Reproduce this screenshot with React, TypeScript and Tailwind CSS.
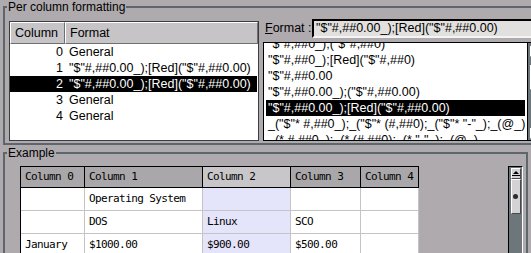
import React from "react";

const leftRows = [
  { col: "0", fmt: "General" },
  { col: "1", fmt: '"$"#,##0.00_);[Red]("$"#,##0.00)' },
  { col: "2", fmt: '"$"#,##0.00_);[Red]("$"#,##0.00)', selected: true },
  { col: "3", fmt: "General" },
  { col: "4", fmt: "General" },
];

const formats = [
  '"$"#,##0_);("$"#,##0)',
  '"$"#,##0_);[Red]("$"#,##0)',
  '"$"#,##0.00',
  '"$"#,##0.00_);("$"#,##0.00)',
  '"$"#,##0.00_);[Red]("$"#,##0.00)',
  '_("$"* #,##0_);_("$"* (#,##0);_("$"* "-"_);_(@_)',
  '_(* #,##0_);_(* (#,##0);_(* "-"_);_(@_)',
];

const columns = ["Column 0", "Column 1", "Column 2", "Column 3", "Column 4"];
const rows = [
  ["", "Operating System", "", "", ""],
  ["", "DOS", "Linux", "SCO", ""],
  ["January", "$1000.00", "$900.00", "$500.00", ""],
];

function Arrow({ up }: { up?: boolean }) {
  return (
    <svg width="8" height="7" viewBox="0 0 8 7">
      {up ? (
        <>
          <path d="M1 4 L4 1 L7 4 Z" fill="#000" />
          <rect x="0" y="5" width="8" height="1" fill="#000" />
        </>
      ) : (
        <>
          <rect x="0" y="1" width="8" height="1" fill="#000" />
          <path d="M1 3 L4 6 L7 3 Z" fill="#000" />
        </>
      )}
    </svg>
  );
}

function Thumb({ h }: { h: string }) {
  return (
    <div
      className={`w-[10px] ${h} bg-[#d4d2d4] border border-t-white border-l-white border-r-[#4a4a4a] border-b-[#4a4a4a] flex items-center justify-center`}
    >
      <div className="w-[5px] h-[5px] rounded-full bg-[#2b2b2b]" />
    </div>
  );
}

function ArrowButton({ up }: { up?: boolean }) {
  return (
    <div className="w-[10px] h-[11px] bg-[#d4d2d4] border border-t-white border-l-white border-r-[#4a4a4a] border-b-[#4a4a4a] flex items-center justify-center">
      <Arrow up={up} />
    </div>
  );
}

export default function App() {
  return (
    <div className="w-[531px] h-[253px] overflow-hidden bg-[#aeaaae] font-['Liberation_Sans',Arial,sans-serif] text-[12px] text-black">
      <fieldset className="mx-[3px] border-2 border-[#5d676b] pt-[5px] pr-[3px] pb-[2px] pl-[4px]">
        <legend className="-ml-[2px] px-[1px] leading-[14px]">Per column formatting</legend>
        <div className="flex items-start gap-[4px] text-[12.5px]">
          {/* column list */}
          <div className="mt-[2px] w-[250px] h-[120px] border border-[#3c3c3c] bg-white">
            <div className="flex h-[22px] leading-[20px]">
              <div className="w-[55px] bg-[#c6c4c6] border border-t-white border-l-white border-r-[#6f6f6f] border-b-[#6f6f6f] pl-[4px]">
                Column
              </div>
              <div className="flex-1 bg-[#c6c4c6] border border-t-white border-l-white border-r-[#6f6f6f] border-b-[#6f6f6f] pl-[4px]">
                Format
              </div>
            </div>
            {leftRows.map((r) => (
              <div
                key={r.col}
                className={`flex h-[16px] leading-[17px] mr-[1px] ${r.selected ? "bg-black text-white" : ""}`}
              >
                <span className="w-[55px] text-right pr-[2px]">{r.col}</span>
                <span className="pl-[4px] whitespace-nowrap">{r.fmt}</span>
              </div>
            ))}
          </div>

          {/* format chooser */}
          <div className="flex-1 flex flex-col gap-[4px]">
            <div className="flex items-center h-[19px]">
              <span className="ml-[2px] w-[47px] whitespace-nowrap">
                <span className="underline">F</span>ormat :
              </span>
              <div className="flex-1 h-[19px] bg-[#e2e0de] border-2 border-t-black border-l-black border-r-[#f4f4f4] border-b-[#f4f4f4] pl-[2px] leading-[15px] whitespace-nowrap overflow-hidden">
                "$"#,##0.00_);[Red]("$"#,##0.00)
              </div>
            </div>
            <div className="h-[99px] border border-black bg-white flex">
              <div className="flex-1 overflow-hidden">
                <div className="-mt-[7px]">
                  {formats.map((f, i) => (
                    <div
                      key={f}
                      className={`h-[16px] leading-[16px] mx-[2px] pl-[2px] whitespace-nowrap overflow-hidden ${i === 4 ? "bg-black text-white" : ""}`}
                    >
                      {f}
                    </div>
                  ))}
                </div>
              </div>
              <div className="w-[14px] bg-[#6d767a] border-l border-black flex flex-col items-center pt-[3px] pb-[1px]">
                <ArrowButton up />
                <div className="mt-[8px]">
                  <Thumb h="h-[25px]" />
                </div>
                <div className="flex-1" />
                <ArrowButton />
              </div>
            </div>
          </div>
        </div>
      </fieldset>

      <fieldset className="mx-[3px] mt-[1px] h-[130px] border-2 border-[#5d676b] pt-[6px] pl-[15px] pr-[3px]">
        <legend className="-ml-[13px] px-[1px] leading-[14px]">Example</legend>
        <div className="flex justify-between items-start">
          <div className="grid grid-cols-[64px_118px_88px_70px_58px] border-t border-l border-black font-['DejaVu_Sans_Mono',monospace] text-[11px] tracking-[-0.6px]">
            {columns.map((c, i) => (
              <div
                key={c}
                className={`h-[21px] leading-[20px] pl-[4px] border-r border-b border-black ${i === 2 ? "bg-[#c8c6c8]" : "bg-[#a9a7a9]"}`}
              >
                {c}
              </div>
            ))}
            {rows.map((row, ri) =>
              row.map((cell, ci) => (
                <div
                  key={ri + "-" + ci}
                  className={`h-[23px] leading-[22px] pl-[4px] border-r border-b border-[#c4c4c4] whitespace-nowrap ${ci === 2 ? "bg-[#e4e4fa]" : "bg-white"}`}
                >
                  {cell}
                </div>
              ))
            )}
          </div>
          <div className="w-[15px] h-[100px] bg-[#6d767a] border border-black border-r-white flex flex-col items-center pt-[1px]">
            <ArrowButton up />
            <Thumb h="h-[35px]" />
          </div>
        </div>
      </fieldset>
    </div>
  );
}
